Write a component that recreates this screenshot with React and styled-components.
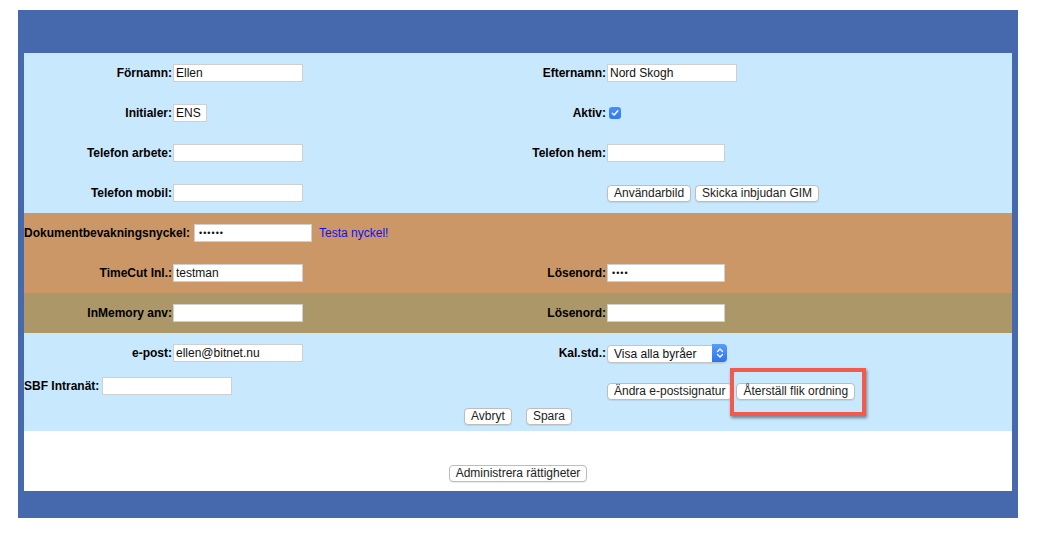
import React from 'react';
import styled, { createGlobalStyle } from 'styled-components';

const font = '"Liberation Sans", Arial, Helvetica, sans-serif';

const GlobalStyle = createGlobalStyle`
  body {
    margin: 0;
    background: #ffffff;
    font-family: ${font};
  }
`;

/* ----------------- Frame ----------------- */

const Frame = styled.div`
  box-sizing: border-box;
  width: 1000px;
  margin: 10px 0 0 18px;
  padding: 43px 6px 27px;
  background-color: #4669ae;
`;

const Section = styled.div`
  background-color: ${(p) => p.$bg};
  padding-bottom: ${(p) => p.$pb || 0}px;
`;

const Row = styled.div`
  display: grid;
  grid-template-columns: 149px 300px 134px 1fr;
  align-items: ${(p) => p.$align || 'center'};
  height: ${(p) => p.$h || 40}px;
`;

const Label = styled.label`
  font-size: 12px;
  font-weight: bold;
  color: #000;
  text-align: right;
  white-space: nowrap;
  padding-right: 1px;
`;

const Cell = styled.div`
  display: flex;
  align-items: center;
  gap: ${(p) => p.$gap || 0}px;
  grid-column: ${(p) => p.$span || 'auto'};
  margin-top: ${(p) => p.$mt || 0}px;
`;

const TextInput = styled.input`
  box-sizing: border-box;
  width: ${(p) => p.$w || 130}px;
  height: 18px;
  margin: 0;
  padding: 0 2px;
  border: 1px solid #cfcfcf;
  background: #fff;
  font-family: ${font};
  font-size: 12px;
  color: #111;
  outline: none;

  &[type='password'] {
    font-size: 9px;
    letter-spacing: 1px;
    padding-left: 4px;
  }
`;

const TestLink = styled.a`
  margin-left: 4px;
  font-size: 12px;
  color: #1010f5;
  text-decoration: none;
  cursor: pointer;
`;

/* ----------------- Controls ----------------- */

const Button = styled.button`
  box-sizing: border-box;
  height: 17px;
  margin: 0;
  padding: 0 6px;
  font-family: ${font};
  font-size: 12px;
  line-height: 15px;
  color: #222;
  background: #fff;
  border: 1px solid #bdbdbd;
  border-radius: 4px;
  box-shadow: 0 1px 1px rgba(0, 0, 0, 0.08);
  white-space: nowrap;
  cursor: pointer;
`;

const CheckBox = styled.span`
  display: inline-flex;
  align-items: center;
  justify-content: center;
  width: 12px;
  height: 12px;
  margin-left: 2px;
  border-radius: 3px;
  background: linear-gradient(#4a90f8, #2f78f2);
`;

const SelectWrap = styled.div`
  position: relative;
  width: 120px;
  height: 18px;
`;

const Select = styled.select`
  box-sizing: border-box;
  width: 100%;
  height: 100%;
  margin: 0;
  padding: 0 18px 0 6px;
  appearance: none;
  font-family: ${font};
  font-size: 12px;
  color: #111;
  background: #fff;
  border: 1px solid #c4c4c4;
  border-radius: 4px;
  box-shadow: 0 1px 1px rgba(0, 0, 0, 0.08);
  outline: none;
`;

const Stepper = styled.span`
  position: absolute;
  top: 0;
  right: 0;
  width: 15px;
  height: 18px;
  display: flex;
  align-items: center;
  justify-content: center;
  border-radius: 0 4px 4px 0;
  background: linear-gradient(#5a9cf9, #2c74ef);
  pointer-events: none;
`;

const Highlight = styled.span`
  position: relative;
  display: inline-flex;

  &::after {
    content: '';
    position: absolute;
    left: -6px;
    top: -15px;
    right: -11px;
    bottom: -16px;
    border: 4px solid #f35a4c;
    box-shadow: 1px 2px 3px rgba(0, 0, 0, 0.45);
    pointer-events: none;
  }
`;

const Actions = styled.div`
  display: flex;
  justify-content: center;
  align-items: center;
  gap: ${(p) => p.$gap || 14}px;
  height: 17px;
`;

const Footer = styled.div`
  display: flex;
  justify-content: center;
  align-items: flex-end;
  height: 60px;
  box-sizing: border-box;
  padding-bottom: 9px;
  background: #fff;
`;

function Check() {
  return (
    <CheckBox>
      <svg width="8" height="8" viewBox="0 0 8 8">
        <path d="M1.3 4.2 L3.2 6 L6.8 1.8" fill="none" stroke="#fff" strokeWidth="1.4" strokeLinecap="round" strokeLinejoin="round" />
      </svg>
    </CheckBox>
  );
}

function CalendarSelect() {
  return (
    <SelectWrap>
      <Select defaultValue="alla">
        <option value="alla">Visa alla byråer</option>
      </Select>
      <Stepper>
        <svg width="8" height="12" viewBox="0 0 8 12">
          <path d="M1.5 4.5 L4 2 L6.5 4.5 M1.5 7.5 L4 10 L6.5 7.5" fill="none" stroke="#fff" strokeWidth="1.3" strokeLinecap="round" strokeLinejoin="round" />
        </svg>
      </Stepper>
    </SelectWrap>
  );
}

export default function App() {
  return (
    <>
      <GlobalStyle />
      <Frame>
        <Section $bg="#c8e8fd">
          <Row>
            <Label>Förnamn:</Label>
            <Cell><TextInput defaultValue="Ellen" /></Cell>
            <Label>Efternamn:</Label>
            <Cell><TextInput defaultValue="Nord Skogh" /></Cell>
          </Row>
          <Row>
            <Label>Initialer:</Label>
            <Cell><TextInput $w={34} defaultValue="ENS" /></Cell>
            <Label>Aktiv:</Label>
            <Cell><Check /></Cell>
          </Row>
          <Row>
            <Label>Telefon arbete:</Label>
            <Cell><TextInput /></Cell>
            <Label>Telefon hem:</Label>
            <Cell><TextInput $w={118} /></Cell>
          </Row>
          <Row>
            <Label>Telefon mobil:</Label>
            <Cell><TextInput /></Cell>
            <span />
            <Cell $gap={4}>
              <Button>Användarbild</Button>
              <Button>Skicka inbjudan GIM</Button>
            </Cell>
          </Row>
        </Section>

        <Section $bg="#cc9766">
          <Row>
            <Cell $span="1 / -1" $gap={3}>
              <Label>Dokumentbevakningsnyckel:</Label>
              <TextInput type="password" $w={118} defaultValue="secret" />
              <TestLink>Testa nyckel!</TestLink>
            </Cell>
          </Row>
          <Row>
            <Label>TimeCut Inl.:</Label>
            <Cell><TextInput defaultValue="testman" /></Cell>
            <Label>Lösenord:</Label>
            <Cell><TextInput type="password" $w={118} defaultValue="test" /></Cell>
          </Row>
        </Section>

        <Section $bg="#ab9767">
          <Row>
            <Label>InMemory anv:</Label>
            <Cell><TextInput /></Cell>
            <Label>Lösenord:</Label>
            <Cell><TextInput type="password" $w={118} /></Cell>
          </Row>
        </Section>

        <Section $bg="#c8e8fd" $pb={6}>
          <Row>
            <Label>e-post:</Label>
            <Cell><TextInput defaultValue="ellen@bitnet.nu" /></Cell>
            <Label>Kal.std.:</Label>
            <Cell><CalendarSelect /></Cell>
          </Row>
          <Row $h={35} $align="start">
            <Cell $span="1 / 4" $gap={2} $mt={4}>
              <Label>SBF Intranät:</Label>
              <TextInput />
            </Cell>
            <Cell $gap={4} $mt={10}>
              <Button>Ändra e-postsignatur</Button>
              <Highlight>
                <Button>Återställ flik ordning</Button>
              </Highlight>
            </Cell>
          </Row>
          <Actions>
            <Button>Avbryt</Button>
            <Button>Spara</Button>
          </Actions>
        </Section>

        <Footer>
          <Button>Administrera rättigheter</Button>
        </Footer>
      </Frame>
    </>
  );
}
